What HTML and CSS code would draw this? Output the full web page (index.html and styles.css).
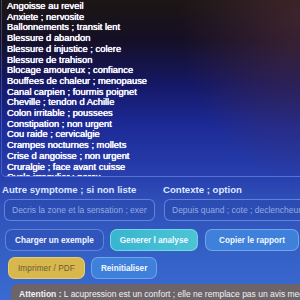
FILE: index.html
```html
<!DOCTYPE html>
<html lang="fr">
<head>
<meta charset="utf-8">
<title>Acupression</title>
<link rel="stylesheet" href="styles.css">
</head>
<body>
<div class="page">
  <div class="list">
    <div class="opt">Angoisse au reveil</div>
    <div class="opt">Anxiete ; nervosite</div>
    <div class="opt">Ballonnements ; transit lent</div>
    <div class="opt">Blessure d abandon</div>
    <div class="opt">Blessure d injustice ; colere</div>
    <div class="opt">Blessure de trahison</div>
    <div class="opt">Blocage amoureux ; confiance</div>
    <div class="opt">Bouffees de chaleur ; menopause</div>
    <div class="opt">Canal carpien ; fourmis poignet</div>
    <div class="opt">Cheville ; tendon d Achille</div>
    <div class="opt">Colon irritable ; poussees</div>
    <div class="opt">Constipation ; non urgent</div>
    <div class="opt">Cou raide ; cervicalgie</div>
    <div class="opt">Crampes nocturnes ; mollets</div>
    <div class="opt">Crise d angoisse ; non urgent</div>
    <div class="opt">Cruralgie ; face avant cuisse</div>
    <div class="opt">Cycle irregulier ; percu</div>
  </div>
  <div class="form">
    <div class="fields">
      <div class="field">
        <label class="lbl">Autre symptome ; si non liste</label>
        <input class="inp" type="text" placeholder="Decris la zone et la sensation ; exemple : douleur">
      </div>
      <div class="field field-right">
        <label class="lbl">Contexte ; option</label>
        <input class="inp" type="text" placeholder="Depuis quand ; cote ; declencheur">
      </div>
    </div>
    <div class="btns">
      <button class="btn btn-dark">Charger un exemple</button>
      <button class="btn btn-teal">Generer l analyse</button>
      <button class="btn btn-blue btn-copy">Copier le rapport</button>
    </div>
    <div class="btns btns-2">
      <button class="btn btn-gold">Imprimer / PDF</button>
      <button class="btn btn-blue">Reinitialiser</button>
    </div>
    <div class="alert"><b>Attention :</b> L acupression est un confort ; elle ne remplace pas un avis medical.</div>
  </div>
</div>
</body>
</html>
```
FILE: styles.css
```css
html, body {
  margin: 0;
  padding: 0;
}
body {
  width: 300px;
  height: 300px;
  overflow: hidden;
  font-family: "Liberation Sans", Arial, sans-serif;
  background: #3454bc;
}
.page {
  width: 300px;
  height: 300px;
  overflow: hidden;
  background:
    radial-gradient(ellipse 120px 160px at 300px 20px, rgba(90, 50, 60, 0.55), rgba(90, 50, 60, 0) 100%),
    linear-gradient(180deg, #1c1614 0px, #150f26 40px, #151866 85px, #1c2a96 125px, #2840ae 178px, #2f4fb8 200px, #3562c8 260px, #3a6ad0 300px);
}
.list {
  height: 177px;
  padding: 1px 0 0 5px;
  box-sizing: border-box;
  overflow: hidden;
  border-bottom: 1px solid rgba(120, 160, 240, 0.55);
  border-left: 1px solid rgba(120, 160, 240, 0.35);
  border-bottom-left-radius: 5px;
  margin-left: 1px;
}
.opt {
  color: #f4f6ff;
  font-size: 9.4px;
  line-height: 10.7px;
  white-space: nowrap;
  text-shadow: 0 0 0.8px #ffffff, 0 0 0.4px #ffffff;
}
.form {
  padding: 7px 0 0 2px;
}
.fields {
  display: grid;
  grid-template-columns: 152px 150px;
  column-gap: 9px;
}
.field {
  display: flex;
  flex-direction: column;
  gap: 4px;
}
.lbl {
  color: #dde7ff;
  font-size: 9.6px;
  font-weight: bold;
  line-height: 11px;
  white-space: nowrap;
}
.field .inp {
  margin-left: 2px;
}
.inp {
  box-sizing: border-box;
  height: 22px;
  width: 151px;
  border: 1px solid rgba(140, 175, 245, 0.55);
  border-radius: 6px;
  background: rgba(40, 70, 170, 0.45);
  padding: 0 7px;
  font-family: "Liberation Sans", Arial, sans-serif;
  font-size: 8.5px;
  color: #dfe8ff;
  outline: none;
}
.field-right .inp {
  width: 150px;
  margin-left: 1px;
}
.inp::placeholder {
  color: #93aae0;
}
.btns {
  display: flex;
  gap: 6px;
  padding-left: 3px;
  margin-top: 8px;
}
.btns-2 {
  margin-top: 6px;
  padding-left: 6px;
}
.btn {
  box-sizing: border-box;
  height: 22px;
  padding: 0 9px;
  border-radius: 7px;
  border: 1px solid rgba(140, 180, 250, 0.5);
  background: rgba(50, 90, 190, 0.55);
  color: #f4f7ff;
  font-family: "Liberation Sans", Arial, sans-serif;
  font-size: 8.2px;
  font-weight: bold;
  white-space: nowrap;
}
.btn-dark {
  background: rgba(45, 80, 180, 0.55);
}
.btn-teal {
  background: linear-gradient(90deg, #38b6cf, #4cc4d6);
  border-color: rgba(150, 230, 240, 0.6);
}
.btn-blue {
  background: #3f80da;
  border-color: rgba(150, 195, 250, 0.55);
}
.btn-copy {
  margin-left: 1px;
  padding: 0 13px;
}
.btn-gold {
  background: #d8b84c;
  border-color: rgba(240, 215, 120, 0.7);
  color: #6a5a3c;
  font-weight: normal;
  font-size: 8.2px;
  letter-spacing: 0.1px;
  padding: 0 9px;
}
.alert {
  margin: 5px 0 0 9px;
  width: 320px;
  height: 30px;
  box-sizing: border-box;
  padding: 5px 8px;
  border-radius: 7px 0 0 0;
  background: #6c6468;
  color: #f2f0f4;
  font-size: 8.5px;
  white-space: nowrap;
}
```
